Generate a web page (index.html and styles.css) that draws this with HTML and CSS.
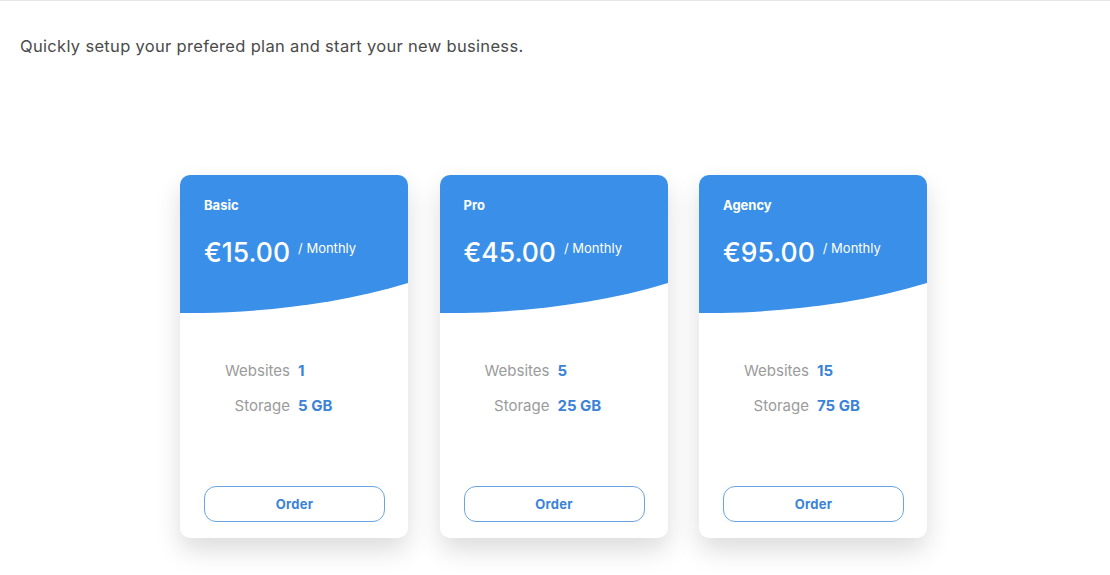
FILE: index.html
```html
<!DOCTYPE html>
<html lang="en">
<head>
  <meta charset="UTF-8">
  <title>Pricing</title>
  <link rel="stylesheet" href="styles.css">
</head>
<body>
  <div class="page">
    <p class="intro">Quickly setup your prefered plan and start your new business.</p>
    <div class="plans">
      <div class="plan">
        <div class="plan-head">
          <div class="plan-name">Basic</div>
          <div class="plan-price"><span class="amount">€15.00</span><span class="period">/ Monthly</span></div>
        </div>
        <svg class="wave" viewBox="0 0 228 30" preserveAspectRatio="none"><path d="M0 0 H228 V0 C150 24 60 31 0 30 Z"/></svg>
        <div class="features">
          <span class="label">Websites</span><span class="value">1</span>
          <span class="label">Storage</span><span class="value">5 GB</span>
        </div>
        <button class="order">Order</button>
      </div>
      <div class="plan">
        <div class="plan-head">
          <div class="plan-name">Pro</div>
          <div class="plan-price"><span class="amount">€45.00</span><span class="period">/ Monthly</span></div>
        </div>
        <svg class="wave" viewBox="0 0 228 30" preserveAspectRatio="none"><path d="M0 0 H228 V0 C150 24 60 31 0 30 Z"/></svg>
        <div class="features">
          <span class="label">Websites</span><span class="value">5</span>
          <span class="label">Storage</span><span class="value">25 GB</span>
        </div>
        <button class="order">Order</button>
      </div>
      <div class="plan">
        <div class="plan-head">
          <div class="plan-name">Agency</div>
          <div class="plan-price"><span class="amount">€95.00</span><span class="period">/ Monthly</span></div>
        </div>
        <svg class="wave" viewBox="0 0 228 30" preserveAspectRatio="none"><path d="M0 0 H228 V0 C150 24 60 31 0 30 Z"/></svg>
        <div class="features">
          <span class="label">Websites</span><span class="value">15</span>
          <span class="label">Storage</span><span class="value">75 GB</span>
        </div>
        <button class="order">Order</button>
      </div>
    </div>
  </div>
</body>
</html>
```

FILE: styles.css
```css
body {
  margin: 0;
  background: #fff;
  font-family: "Inter", "Open Sans", sans-serif;
}
.page {
  border-top: 1px solid #e6e6e6;
  padding: 0 20px 37px;
}
.intro {
  margin: 35px 0 0;
  font-size: 16.5px;
  line-height: 20px;
  letter-spacing: 0.32px;
  color: #4a4a4a;
}
.plans {
  display: flex;
  justify-content: center;
  gap: 31.5px;
  margin-top: 119px;
  padding-right: 3px;
}
.plan {
  width: 228px;
  height: 363px;
  background: #fff;
  border-radius: 10px;
  overflow: hidden;
  box-shadow: 0 12px 26px rgba(0, 0, 0, 0.14);
  display: flex;
  flex-direction: column;
}
.plan-head {
  background: #3a8fe9;
  color: #fff;
  padding: 22px 24px 15px;
}
.plan-name {
  font-size: 13px;
  line-height: 16px;
  font-weight: 700;
}
.plan-price {
  margin-top: 23px;
  display: flex;
  align-items: flex-start;
  gap: 8px;
}
.amount {
  font-size: 26.5px;
  line-height: 32px;
  font-weight: 500;
}
.period {
  font-size: 13px;
  line-height: 20px;
  margin-top: 2px;
}
.wave {
  display: block;
  width: 228px;
  height: 30px;
  fill: #3a8fe9;
}
.features {
  display: grid;
  grid-template-columns: 110px auto;
  column-gap: 8px;
  row-gap: 15px;
  padding-top: 48px;
  font-size: 15px;
  line-height: 20px;
}
.label {
  text-align: right;
  color: #9b9b9b;
}
.value {
  color: #3b83d8;
  font-weight: 700;
}
.order {
  margin: auto 23px 16px 24px;
  height: 36px;
  background: #fff;
  border: 1px solid #6aa4e2;
  border-radius: 12px;
  color: #3b83d8;
  font-family: inherit;
  font-size: 13px;
  font-weight: 700;
  letter-spacing: 0.3px;
  cursor: pointer;
}
```
